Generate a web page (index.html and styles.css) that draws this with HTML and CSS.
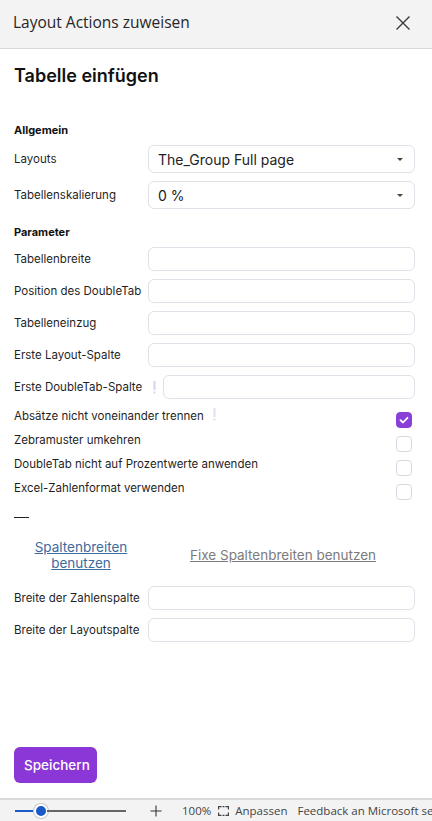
FILE: index.html
```html
<!DOCTYPE html>
<html lang="de">
<head>
<meta charset="utf-8">
<title>Layout Actions zuweisen</title>
<link rel="stylesheet" href="styles.css">
</head>
<body>
<div class="app">
  <header class="topbar">
    <span class="topbar-title">Layout Actions zuweisen</span>
    <svg class="close" width="16" height="16" viewBox="0 0 16 16"><path d="M1.5 1.5 L14.5 14.5 M14.5 1.5 L1.5 14.5" stroke="#3a3a3a" stroke-width="1.4" fill="none"/></svg>
  </header>
  <main class="panel">
    <h1 class="title">Tabelle einfügen</h1>

    <h2 class="section">Allgemein</h2>
    <div class="row">
      <label class="lbl">Layouts</label>
      <div class="select"><span>The_Group Full page</span><svg width="8" height="5" viewBox="0 0 8 5"><path d="M1 1 L7 1 L4 4 Z" fill="#444"/></svg></div>
    </div>
    <div class="row">
      <label class="lbl">Tabellenskalierung</label>
      <div class="select"><span>0 %</span><svg width="8" height="5" viewBox="0 0 8 5"><path d="M1 1 L7 1 L4 4 Z" fill="#444"/></svg></div>
    </div>

    <h2 class="section section-param">Parameter</h2>
    <div class="inputs">
      <div class="row"><label class="lbl">Tabellenbreite</label><div class="input"></div></div>
      <div class="row"><label class="lbl">Position des DoubleTab</label><div class="input"></div></div>
      <div class="row"><label class="lbl">Tabelleneinzug</label><div class="input"></div></div>
      <div class="row"><label class="lbl">Erste Layout-Spalte</label><div class="input"></div></div>
      <div class="row"><label class="lbl lbl-warn">Erste DoubleTab-Spalte <svg class="warn" width="3" height="13" viewBox="0 0 3 13"><rect x="0.5" y="0" width="2" height="9" fill="#d9d2ee"/><rect x="0.5" y="10.5" width="2" height="2" fill="#d9d2ee"/></svg></label><div class="input"></div></div>
    </div>

    <div class="checks">
      <div class="check-row"><span class="clbl">Absätze nicht voneinander trennen <svg class="warn warn2" width="3" height="13" viewBox="0 0 3 13"><rect x="0.5" y="0" width="2" height="9" fill="#e2ddf0"/><rect x="0.5" y="10.5" width="2" height="2" fill="#e2ddf0"/></svg></span><span class="box checked"><svg width="16" height="16" viewBox="0 0 16 16"><path d="M4.5 8.2 L7 10.5 L11.5 5.8" stroke="#fff" stroke-width="1.8" fill="none" stroke-linecap="round" stroke-linejoin="round"/></svg></span></div>
      <div class="check-row"><span class="clbl">Zebramuster umkehren</span><span class="box"></span></div>
      <div class="check-row"><span class="clbl">DoubleTab nicht auf Prozentwerte anwenden</span><span class="box"></span></div>
      <div class="check-row"><span class="clbl">Excel-Zahlenformat verwenden</span><span class="box"></span></div>
    </div>

    <hr class="rule">

    <div class="links">
      <a class="link link-active" href="#">Spaltenbreiten benutzen</a>
      <a class="link link-muted" href="#">Fixe Spaltenbreiten benutzen</a>
    </div>

    <div class="inputs">
      <div class="row"><label class="lbl">Breite der Zahlenspalte</label><div class="input"></div></div>
      <div class="row"><label class="lbl">Breite der Layoutspalte</label><div class="input"></div></div>
    </div>

    <button class="save">Speichern</button>
  </main>
  <footer class="statusbar">
    <div class="slider">
      <span class="track-on"></span>
      <span class="knob"></span>
      <span class="track-off"></span>
    </div>
    <svg class="plus" width="12" height="12" viewBox="0 0 12 12"><path d="M6 0.5 V11.5 M0.5 6 H11.5" stroke="#333" stroke-width="1.1"/></svg>
    <span class="zoomval">100%</span>
    <svg class="fit" width="11" height="10" viewBox="0 0 11 10"><path d="M0.6 3.5 V0.6 H3.5 M7.5 0.6 H10.4 V3.5 M10.4 6.5 V9.4 H7.5 M3.5 9.4 H0.6 V6.5" stroke="#444" stroke-width="1.2" fill="none"/><path d="M4.5 0.6 H6.5 M4.5 9.4 H6.5" stroke="#444" stroke-width="1.2"/></svg>
    <span class="fit-lbl">Anpassen</span>
    <span class="feedback">Feedback an Microsoft senden</span>
  </footer>
</div>
</body>
</html>
```
FILE: styles.css
```css
* { box-sizing: border-box; }
html, body { margin: 0; padding: 0; }
body {
  width: 432px;
  height: 821px;
  overflow: hidden;
  background: #fff;
  font-family: Inter, "Liberation Sans", sans-serif;
  color: #1b1b1b;
}
.app {
  display: flex;
  flex-direction: column;
  height: 821px;
}
.topbar {
  height: 49px;
  flex: none;
  background: #f3f3f3;
  border-bottom: 1px solid #d8d8d8;
  display: flex;
  align-items: center;
  justify-content: space-between;
  padding: 0 21px 0 13px;
}
.topbar-title {
  font-family: "Open Sans", "Noto Sans", sans-serif;
  font-size: 15.5px;
  font-weight: 500;
  color: #262626;
  margin-top: -4px;
}
.close { margin-top: -3px; }
.panel {
  flex: 1;
  display: flex;
  flex-direction: column;
  padding: 15px 17px 0 14px;
}
.title {
  margin: 0;
  font-size: 18px;
  line-height: 24px;
  font-weight: 600;
  color: #111;
}
.section {
  margin: 34px 0 7px;
  font-size: 11px;
  line-height: 16px;
  font-weight: 700;
  color: #111;
}
.section-param { margin-top: 7px; }
.row {
  display: flex;
  align-items: center;
  margin-bottom: 8px;
}
.lbl {
  width: 134px;
  flex: none;
  font-size: 11.5px;
  color: #1f1f1f;
  display: flex;
  align-items: center;
}
.lbl-warn { width: 149px; justify-content: space-between; padding-right: 7px; }
.warn { display: inline-block; flex: none; }
.select {
  flex: 1;
  height: 28px;
  border: 1px solid #dfe2e8;
  border-radius: 6px;
  display: flex;
  align-items: center;
  justify-content: space-between;
  padding: 0 10px 0 9px;
  font-size: 14px;
  color: #222;
}
.input {
  flex: 1;
  height: 24px;
  border: 1px solid #dfe2e8;
  border-radius: 6px;
}
.inputs .row:last-child { margin-bottom: 0; }
.checks {
  margin-top: 9px;
  display: flex;
  flex-direction: column;
  gap: 4px;
}
.check-row {
  display: flex;
  justify-content: space-between;
  align-items: flex-start;
  height: 20px;
  padding-right: 3px;
}
.clbl {
  font-size: 11.5px;
  line-height: 16px;
  color: #1f1f1f;
  display: flex;
  align-items: center;
}
.warn2 { margin-left: 9px; margin-top: -3px; }
.box {
  width: 16px;
  height: 16px;
  margin-top: 4px;
  border: 1px solid #d6d9df;
  border-radius: 4px;
  display: flex;
}
.box.checked {
  background: #8a3fd9;
  border-color: #8a3fd9;
}
.box.checked svg { margin: -1px; }
.rule {
  width: 15px;
  margin: 17px 0 0;
  border: 0;
  border-top: 1px solid #222;
  height: 0;
}
.links {
  display: flex;
  align-items: center;
  margin-top: 21px;
  height: 32px;
}
.link {
  font-size: 13.5px;
  line-height: 16px;
  text-decoration: underline;
}
.link-active {
  color: #3d6b9e;
  width: 100px;
  text-align: center;
  margin-left: 17px;
}
.link-muted {
  color: #7b7b7b;
  margin-left: 59px;
}
.links + .inputs { margin-top: 15px; }
.save {
  align-self: flex-start;
  margin-top: 105px;
  height: 36px;
  padding: 0 10px;
  width: 83px;
  border: 0;
  border-radius: 6px;
  background: #8b36d6;
  color: #fff;
  font-family: Inter, "Liberation Sans", sans-serif;
  font-size: 13.5px;
  font-weight: 500;
}
.statusbar {
  height: 23px;
  flex: none;
  margin-top: auto;
  background: #f3f3f3;
  border-top: 2px solid #d9d9d9;
  display: flex;
  align-items: center;
  padding-left: 15px;
  white-space: nowrap;
  overflow: hidden;
  font-family: "Open Sans", "Noto Sans", sans-serif;
  font-size: 11.5px;
  color: #444;
}
.statusbar > * { flex: none; }
.slider {
  display: flex;
  align-items: center;
  width: 113px;
}
.track-on { width: 20px; height: 2px; background: #1f5bc6; }
.knob {
  width: 14px;
  height: 14px;
  border-radius: 50%;
  background: #1a5ac8;
  border: 2px solid #fff;
  box-shadow: 0 0 0 1px #c9c9c9;
  margin: 0 -1px;
}
.track-off { width: 79px; height: 2px; background: #666; }
.plus { margin-left: 22px; }
.zoomval { margin-left: 20px; }
.fit { margin-left: 7px; }
.fit-lbl { margin-left: 6px; }
.feedback { margin-left: 10px; }
```
